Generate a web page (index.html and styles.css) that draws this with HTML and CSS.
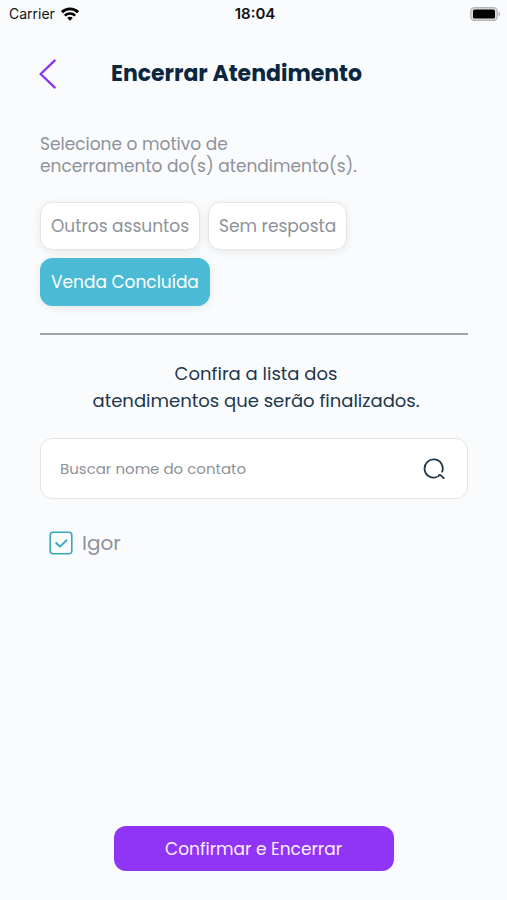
FILE: index.html
```
<!DOCTYPE html>
<html lang="pt-BR">
<head>
<meta charset="utf-8">
<meta name="viewport" content="width=device-width, initial-scale=1">
<title>Encerrar Atendimento</title>
<link rel="stylesheet" href="styles.css">
</head>
<body>
<div class="statusbar">
	<div class="carrier">
		<span>Carrier</span>
		<svg width="18" height="14" viewBox="0 0 18 14" fill="none" stroke="#000" stroke-width="2.8">
			<path d="M0.9 5.2a11.6 11.6 0 0 1 16.2 0"/>
			<path d="M3.8 8.6a7.4 7.4 0 0 1 10.4 0" stroke-width="2.5"/>
			<path d="M9 13.8l-2.8-2.8a4 4 0 0 1 5.6 0z" fill="#000" stroke="none"/>
		</svg>
	</div>
	<time>18:04</time>
	<div class="battery">
		<svg width="31" height="14" viewBox="0 0 31 14">
			<rect x="0.8" y="0.6" width="26.4" height="12.8" rx="3.6" fill="#ddd" stroke="#b4b5b7" stroke-width="1.2"/>
			<rect x="3" y="2.4" width="22" height="9.2" rx="1.6" fill="#000"/>
			<path d="M28.6 4.8a2.4 2.4 0 0 1 0 4.4z" fill="#a9aaac"/>
		</svg>
	</div>
</div>

<header class="header">
	<button type="button" class="back" aria-label="Voltar">
		<svg width="18" height="30" viewBox="0 0 18 30" fill="none" stroke="#8b35f0" stroke-width="2.4" stroke-linecap="round" stroke-linejoin="round">
			<path d="M15.6 1.6L1.6 15l14 13.4"/>
		</svg>
	</button>
	<h1>Encerrar Atendimento</h1>
</header>

<main class="content">
	<p class="reason">Selecione o motivo de<br>encerramento do(s) atendimento(s).</p>
	<div class="chips">
		<button type="button" class="chip" aria-pressed="false">Outros assuntos</button>
		<button type="button" class="chip" aria-pressed="false">Sem resposta</button>
		<button type="button" class="chip active" aria-pressed="true">Venda Concluída</button>
	</div>
	<hr>
	<p class="confirm">Confira a lista dos<br>atendimentos que serão finalizados.</p>
	<form class="search">
		<input type="text" placeholder="Buscar nome do contato" aria-label="Buscar nome do contato">
		<button type="submit" aria-label="Buscar">
			<svg width="22" height="22" viewBox="0 0 22 22" fill="none" stroke="#21374b" stroke-width="1.8" stroke-linecap="round" stroke-linejoin="round">
				<path d="M19.2 13.6a9.1 9.1 0 1 0-5.4 5.4"/>
				<path d="M15.4 18.2q1.2-2.4 2.8-.4l2.6 2.4"/>
			</svg>
		</button>
	</form>
	<label class="contact">
		<input type="checkbox" checked>
		<svg class="box" width="24" height="24" viewBox="0 0 24 24" fill="none" stroke="#36a8c0" stroke-linecap="round" stroke-linejoin="round">
			<rect x="1.2" y="1.2" width="21.6" height="21.6" rx="3" stroke-width="1.6"/>
			<path class="tick" d="M7.2 12l3.8 3.6 6.4-6.2" stroke-width="2"/>
		</svg>
		<span>Igor</span>
	</label>
</main>

<footer class="footer">
	<button type="button" class="submit">Confirmar e Encerrar</button>
</footer>
</body>
</html>
```
FILE: styles.css
```
*{box-sizing:border-box;}
body{margin:0; min-height:100vh; display:flex; flex-direction:column; background:#fafbfd; color:#21374b; font-family:Poppins,Inter,sans-serif; font-size:17px;}
h1,p{margin:0; font-weight:400;}
button{padding:0; border:0; background:none; font:inherit; color:inherit; cursor:pointer;}
svg{display:block;}

.statusbar{display:grid; grid-template-columns:1fr auto 1fr; align-items:center; height:27px; padding:0 6px 0 9px; color:#111; font-family:Inter,sans-serif; font-size:14px;}
.carrier{display:flex; align-items:center; gap:6px;}
.statusbar time{font-size:15px; font-weight:600;}
.battery{justify-self:end;}

.header{display:flex; align-items:center; height:94px; padding:0 39px;}
.back{width:72px; height:40px;}
.header h1{color:#0b2740; font-size:22px; line-height:32px; font-weight:700;}

.content{display:flex; flex-direction:column; padding:12px 39px 0 40px;}
.reason{color:#8e9299; line-height:22px;}
.chips{display:flex; flex-wrap:wrap; gap:8px; margin-top:25px;}
.chip{height:48px; padding:0 10px; border:1px solid #e4e5e7; border-radius:12px; background:#fff; box-shadow:0 2px 8px rgba(0,0,0,0.08); color:#8e9299;}
.chip.active{border-color:#4bbbd5; background:#4bbbd5; color:#fff;}
hr{width:100%; height:2px; margin:27px 0 25px; border:0; background:#a0a2a8;}
.confirm{padding-left:4px; font-size:18px; line-height:27px; text-align:center;}

.search{display:flex; align-items:center; height:61px; margin-top:24px; padding:0 22px 0 19px; border:1px solid #e2e4e6; border-radius:12px; background:#fff;}
.search input{flex:1; min-width:0; padding:0; border:0; outline:0; background:none; color:#21374b; font:inherit; font-size:15px;}
.search input::placeholder{color:#8e9299; opacity:1;}

.contact{display:flex; align-items:center; align-self:flex-start; gap:9px; margin-top:29px; padding-left:9px; color:#8e9299; font-size:20px; line-height:30px; cursor:pointer;}
.contact input{position:absolute; width:24px; height:24px; margin:0; opacity:0;}
.tick{visibility:hidden;}
.contact input:checked + .box .tick{visibility:visible;}

.footer{display:flex; justify-content:center; margin-top:auto; padding:24px 40px 29px;}
.submit{width:280px; height:45px; border-radius:12px; background:#9035f5; color:#fbf0ff;}
```
